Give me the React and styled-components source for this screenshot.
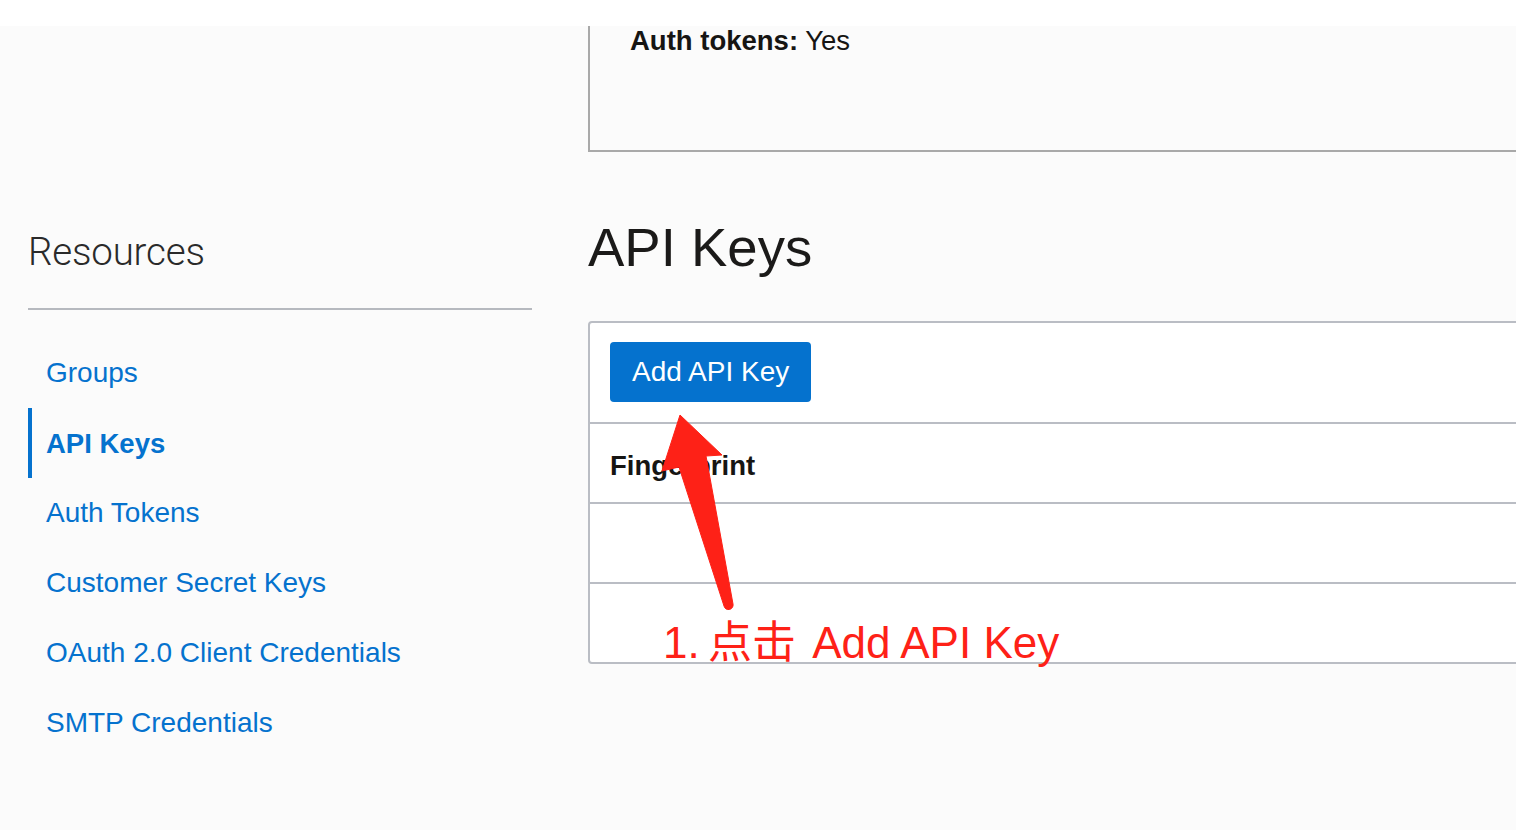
import React from "react";
import styled, { createGlobalStyle } from "styled-components";

const Global = createGlobalStyle`
  html, body { margin: 0; padding: 0; }
  body {
    width: 1516px;
    height: 830px;
    overflow: hidden;
    background: #fbfbfb;
    font-family: "Liberation Sans", Arial, sans-serif;
    color: #161513;
  }
`;

const Page = styled.div`
  position: relative;
  width: 1516px;
  height: 830px;
  overflow: hidden;
  background: #fbfbfb;
`;

const TopBar = styled.div`
  height: 26px;
  background: #ffffff;
`;

const Body = styled.div`
  display: flex;
  gap: 56px;
  padding-left: 28px;
`;

const Sidebar = styled.aside`
  width: 504px;
  flex: none;
  padding-top: 203px;
`;

const SideTitle = styled.h2`
  margin: 0;
  padding-bottom: 33px;
  border-bottom: 2px solid #b6b9bf;
  font-family: Roboto, "Liberation Sans", sans-serif;
  font-weight: 300;
  font-size: 38.5px;
  line-height: 46px;
  color: #2a2a2a;
  letter-spacing: -0.2px;
`;

const NavList = styled.ul`
  list-style: none;
  margin: 28px 0 0;
  padding: 0;
`;

const NavItem = styled.li`
  height: 70px;
  line-height: ${(p) => (p.$active ? "72px" : "70px")};
  padding-left: 14px;
  border-left: 4px solid ${(p) => (p.$active ? "#0572ce" : "transparent")};
  font-size: ${(p) => (p.$active ? "27.5px" : "28px")};
  font-weight: ${(p) => (p.$active ? 700 : 400)};
  color: #0572ce;
  white-space: nowrap;
`;

const Main = styled.main`
  width: 1100px;
  flex: none;
`;

const InfoBox = styled.div`
  box-sizing: border-box;
  height: 126px;
  padding: 1px 0 0 40px;
  border-left: 2px solid #a9a9a9;
  border-bottom: 2px solid #a9a9a9;
  font-size: 27.5px;
  line-height: 27px;
`;

const Label = styled.b`
  font-weight: 700;
`;

const Heading = styled.h1`
  margin: 63px 0 41px 0;
  font-size: 54.5px;
  font-weight: 400;
  line-height: 65px;
  color: #1b1a19;
`;

const Panel = styled.div`
  border: 2px solid #babdc4;
  border-radius: 4px;
  background: #ffffff;
`;

const Toolbar = styled.div`
  display: flex;
  padding: 19px 20px 20px 20px;
  border-bottom: 2px solid #babdc4;
`;

const PrimaryButton = styled.button`
  height: 60px;
  padding: 0 22px;
  border: none;
  border-radius: 4px;
  background: #0572ce;
  color: #ffffff;
  font-family: "Liberation Sans", Arial, sans-serif;
  font-size: 28px;
  cursor: pointer;
`;

const Row = styled.div`
  box-sizing: border-box;
  height: ${(p) => (p.$last ? "78px" : "80px")};
  padding: 6px 0 0 20px;
  line-height: 72px;
  font-size: 27.5px;
  font-weight: ${(p) => (p.$header ? 700 : 400)};
  border-bottom: ${(p) => (p.$last ? "none" : "2px solid #babdc4")};
`;

const Overlay = styled.svg`
  position: absolute;
  left: 0;
  top: 0;
  width: 1516px;
  height: 830px;
  pointer-events: none;
`;

const Note = styled.div`
  position: absolute;
  left: 663px;
  top: 621px;
  font-family: "Liberation Sans", "Noto Sans CJK SC", sans-serif;
  font-size: 44px;
  line-height: 44px;
  color: #fe2117;
  white-space: nowrap;
`;

const Cjk = styled.span`
  margin: 0 4px 0 -4px;
`;

const navItems = [
  "Groups",
  "API Keys",
  "Auth Tokens",
  "Customer Secret Keys",
  "OAuth 2.0 Client Credentials",
  "SMTP Credentials",
];

export default function App() {
  return (
    <Page>
      <Global />
      <TopBar />
      <Body>
        <Sidebar>
          <SideTitle>Resources</SideTitle>
          <NavList>
            {navItems.map((n) => (
              <NavItem key={n} $active={n === "API Keys"}>
                {n}
              </NavItem>
            ))}
          </NavList>
        </Sidebar>
        <Main>
          <InfoBox>
            <Label>Auth tokens:</Label> Yes
          </InfoBox>
          <Heading>API Keys</Heading>
          <Panel>
            <Toolbar>
              <PrimaryButton>Add API Key</PrimaryButton>
            </Toolbar>
            <Row $header>Fingerprint</Row>
            <Row />
            <Row $last />
          </Panel>
        </Main>
      </Body>
      <Overlay viewBox="0 0 1516 830">
        <path
          d="M680 415 L722 455 L706 456 L733 604 A4.5 4.5 0 0 1 724 606 L679 467 L662 471 Z"
          fill="#fe2117"
          stroke="#fe2117"
          strokeWidth="1"
          strokeLinejoin="round"
        />
      </Overlay>
      <Note>
        1. <Cjk>点击</Cjk> Add API Key
      </Note>
    </Page>
  );
}
